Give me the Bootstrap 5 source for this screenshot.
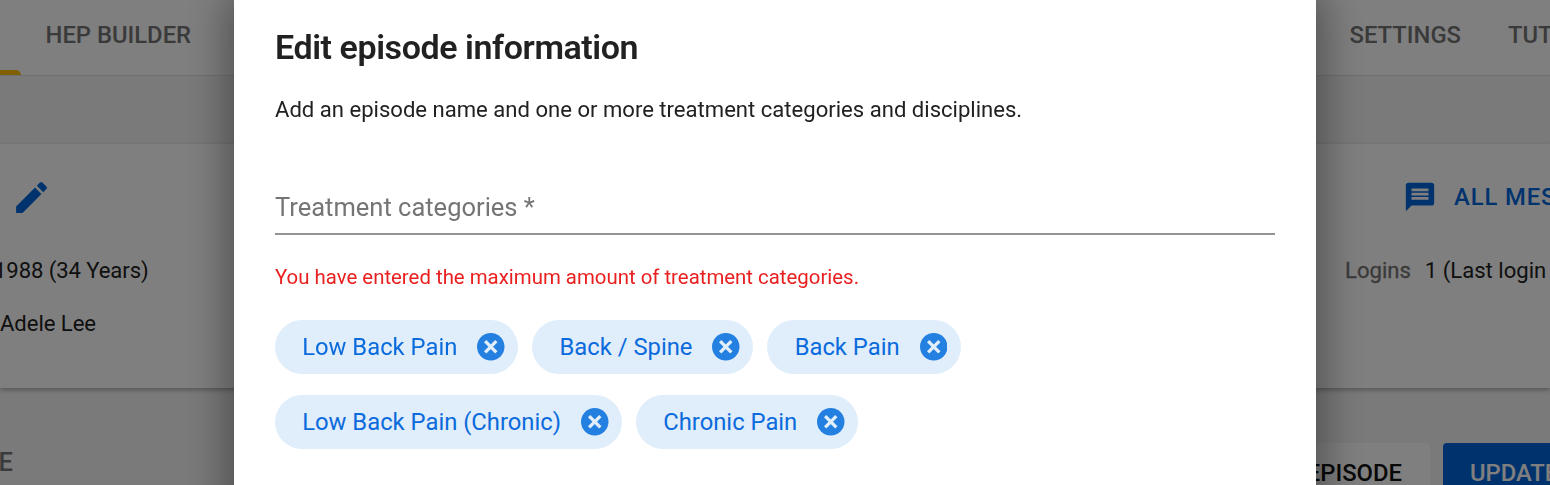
<!DOCTYPE html>
<html lang="en">
<head>
<meta charset="utf-8">
<meta name="viewport" content="width=device-width, initial-scale=1">
<title>Edit episode information</title>
<link href="https://cdn.jsdelivr.net/npm/bootstrap@5.3.0/dist/css/bootstrap.min.css" rel="stylesheet">
<style>
  body { font-family: Roboto, "Liberation Sans", sans-serif; font-size: 22.08px; line-height: 30px; color: #212121; background: #f5f5f5; height: 485px; overflow: hidden; }
  .page { height: 485px; overflow: hidden; }
  .side { width: 234px; flex: none; white-space: nowrap; overflow: hidden; }
  .topbar { height: 76px; border-bottom: 1px solid #e0e0e0; font-size: 23.8px; font-weight: 500; color: #757575; }
  .topbar .side { height: 75px; padding-top: 20px; }
  .top-left { padding-left: 45.5px; }
  .top-right { padding-left: 33.5px; gap: 47px; }
  .tab-marker { width: 21px; height: 5px; margin-left: -45.5px; background: #ffc107; border-top-right-radius: 5px; }
  .patient { margin-top: 68px; height: 244px; box-shadow: 0 2px 5px rgba(0,0,0,.3); }
  .lead-row { height: 32px; margin-top: 37px; }
  .pencil { width: 41px; height: 41px; margin: -4px 0 0 10.5px; }
  .messages { color: #0067dc; font-weight: 500; font-size: 23.8px; letter-spacing: .9px; padding-left: 87px; gap: 17px; }
  .dob { margin: 42px 0 0 -6px; padding-top: 1px; letter-spacing: -.08px; }
  .clinician { margin-top: 23px; letter-spacing: -.05px; }
  .login-row { margin: 43px 0 0 29px; gap: 14px; }
  .grey { color: #757575; }
  .login-row .grey { -webkit-text-stroke: .3px #757575; }
  .action-bar { padding-top: 55px; height: 97px; }
  .action { height: 59px; border-radius: 4px; font-weight: 500; font-size: 23.8px; }
  .action-new { width: 220px; margin-left: -106px; background: #fff; color: #111; padding-right: 28px; }
  .action-update { width: 200px; background: #0067dc; color: #fff; padding-left: 27px; margin-left: 13px; }
  .section-name { font-size: 25.5px; font-weight: 500; color: #757575; padding-top: 59px; text-indent: -1.5px; }
  .modal-backdrop { --bs-backdrop-opacity: .5; }
  .episode-dialog { width: 1082px; max-width: none; margin: -20px auto 0; }
  .episode-dialog .modal-content { height: 700px; border: 0; border-radius: 7px; padding: 47px 41px; color: #212121;
    box-shadow: 0 20px 42px 8px rgba(0,0,0,.37); }
  .dialog-name { font-size: 34px; line-height: 40px; font-weight: 600; letter-spacing: -.42px; margin: 0; }
  .intro { margin: 28px 0 0; }
  .category-field { margin-top: 66px; height: 44px; border-bottom: 2px solid #949494; font-size: 25.5px; line-height: 32px; color: #757575; }
  .limit-note { color: #ea1f1f; font-size: 20.4px; margin-top: 27px; }
  .chips { margin-top: 28px; gap: 20.5px 14px; width: 700px; }
  .chip { height: 54.4px; border-radius: 28px; background: #e0edfb; color: #0b6bdc; font-size: 23.8px; padding: 0 13.5px 0 27.2px; white-space: nowrap; }
  .chip svg { width: 27.5px; height: 27.5px; margin-left: 20px; }
</style>
</head>
<body>
<div class="page d-flex flex-column">
  <nav class="topbar bg-white d-flex justify-content-between flex-shrink-0">
    <div class="side top-left d-flex flex-column justify-content-between">
      <span>HEP BUILDER</span>
      <div class="tab-marker"></div>
    </div>
    <div class="side top-right d-flex"><span>SETTINGS</span><span>TUTORIALS</span></div>
  </nav>
  <section class="patient bg-white d-flex justify-content-between flex-shrink-0">
    <div class="side">
      <div class="lead-row d-flex">
        <svg class="pencil flex-shrink-0" viewBox="0 0 24 24" fill="#0067dc"><path d="M3 17.25V21h3.75L17.81 9.94l-3.75-3.75zM20.71 7.04a1 1 0 0 0 0-1.41l-2.34-2.34a1 1 0 0 0-1.41 0l-1.83 1.83 3.75 3.75z"/></svg>
      </div>
      <div class="dob">1988 (34 Years)</div>
      <div class="clinician">Adele Lee</div>
    </div>
    <div class="side">
      <div class="lead-row messages d-flex align-items-center">
        <svg class="flex-shrink-0" width="34" height="34" viewBox="0 0 24 24" fill="#0067dc"><path d="M20 2H4a2 2 0 0 0-2 2v18l4-4h14a2 2 0 0 0 2-2V4a2 2 0 0 0-2-2zM18 14H6v-2h12zm0-3H6V9h12zm0-3H6V6h12z"/></svg>
        <span>ALL MESSAGES</span>
      </div>
      <div class="login-row d-flex"><span class="grey">Logins</span><span>1 (Last login</span></div>
    </div>
  </section>
  <section class="d-flex justify-content-between">
    <div class="side section-name">E</div>
    <div class="side action-bar d-flex">
      <div class="action action-new d-flex align-items-center justify-content-end flex-shrink-0">EPISODE</div>
      <div class="action action-update d-flex align-items-center flex-shrink-0">UPDATE</div>
    </div>
  </section>
</div>

<div class="modal-backdrop show"></div>
<div class="modal d-block overflow-hidden" tabindex="-1" role="dialog">
  <div class="modal-dialog episode-dialog">
    <div class="modal-content">
      <h1 class="dialog-name">Edit episode information</h1>
      <p class="intro">Add an episode name and one or more treatment categories and disciplines.</p>
      <div class="category-field">Treatment categories *</div>
      <div class="limit-note">You have entered the maximum amount of treatment categories.</div>
      <div class="chips d-flex flex-wrap">
        <div class="chip d-flex align-items-center"><span>Low Back Pain</span><svg viewBox="0 0 28 28"><circle cx="14" cy="14" r="14" fill="#2480e0"/><path d="M8.3 8.3l11.4 11.4M19.7 8.3L8.3 19.7" stroke="#e0edfb" stroke-width="3.4"/></svg></div>
        <div class="chip d-flex align-items-center"><span>Back / Spine</span><svg viewBox="0 0 28 28"><circle cx="14" cy="14" r="14" fill="#2480e0"/><path d="M8.3 8.3l11.4 11.4M19.7 8.3L8.3 19.7" stroke="#e0edfb" stroke-width="3.4"/></svg></div>
        <div class="chip d-flex align-items-center"><span>Back Pain</span><svg viewBox="0 0 28 28"><circle cx="14" cy="14" r="14" fill="#2480e0"/><path d="M8.3 8.3l11.4 11.4M19.7 8.3L8.3 19.7" stroke="#e0edfb" stroke-width="3.4"/></svg></div>
        <div class="chip d-flex align-items-center"><span>Low Back Pain (Chronic)</span><svg viewBox="0 0 28 28"><circle cx="14" cy="14" r="14" fill="#2480e0"/><path d="M8.3 8.3l11.4 11.4M19.7 8.3L8.3 19.7" stroke="#e0edfb" stroke-width="3.4"/></svg></div>
        <div class="chip d-flex align-items-center"><span>Chronic Pain</span><svg viewBox="0 0 28 28"><circle cx="14" cy="14" r="14" fill="#2480e0"/><path d="M8.3 8.3l11.4 11.4M19.7 8.3L8.3 19.7" stroke="#e0edfb" stroke-width="3.4"/></svg></div>
      </div>
    </div>
  </div>
</div>
<script src="https://cdn.jsdelivr.net/npm/bootstrap@5.3.0/dist/js/bootstrap.bundle.min.js"></script>
</body>
</html>
